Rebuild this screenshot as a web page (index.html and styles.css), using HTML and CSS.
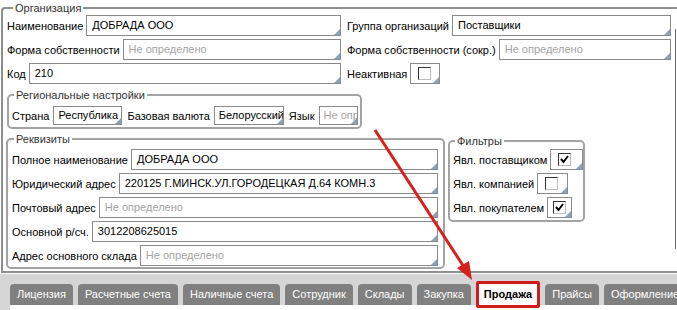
FILE: index.html
```html
<!DOCTYPE html>
<html>
<head>
<meta charset="utf-8">
<link rel="stylesheet" href="styles.css">
</head>
<body>
<div class="page">
  <fieldset class="org">
    <legend>Организация</legend>
    <div class="org-body">
      <div class="main">
        <div class="grid">
          <div class="cell"><span class="lbl">Наименование</span><div class="inp">ДОБРАДА ООО</div></div>
          <div class="cell"><span class="lbl">Группа организаций</span><div class="inp">Поставщики</div></div>
          <div class="cell"><span class="lbl">Форма собственности</span><div class="inp ph">Не определено</div></div>
          <div class="cell"><span class="lbl">Форма собственности (сокр.)</span><div class="inp ph">Не определено</div></div>
          <div class="cell"><span class="lbl">Код</span><div class="inp">210</div></div>
          <div class="cell"><span class="lbl">Неактивная</span><div class="inp chk w30"><span class="cb"></span></div></div>
        </div>
        <fieldset class="box region">
          <legend>Региональные настройки</legend>
          <div class="rrow">
            <span class="lbl">Страна</span><div class="inp small w69">Республика Беларусь</div>
            <span class="lbl">Базовая валюта</span><div class="inp small w70">Белорусский рубль</div>
            <span class="lbl">Язык</span><div class="inp small ph w39">Не определено</div>
          </div>
        </fieldset>
        <div class="lower">
          <fieldset class="box req">
            <legend>Реквизиты</legend>
            <div class="rows">
              <div class="cell"><span class="lbl">Полное наименование</span><div class="inp">ДОБРАДА ООО</div></div>
              <div class="cell"><span class="lbl">Юридический адрес</span><div class="inp">220125 Г.МИНСК.УЛ.ГОРОДЕЦКАЯ Д.64 КОМН.3</div></div>
              <div class="cell"><span class="lbl">Почтовый адрес</span><div class="inp ph">Не определено</div></div>
              <div class="cell"><span class="lbl">Основной р/сч.</span><div class="inp">3012208625015</div></div>
              <div class="cell"><span class="lbl">Адрес основного склада</span><div class="inp ph">Не определено</div></div>
            </div>
          </fieldset>
          <fieldset class="box filt">
            <legend>Фильтры</legend>
            <div class="rows">
              <div class="cell"><span class="lbl">Явл. поставщиком</span><div class="inp chk w33"><span class="cb on"><svg width="11" height="11" viewBox="0 0 11 11"><path d="M2 5 L4.5 8 L9 2" fill="none" stroke="#000" stroke-width="2"/></svg></span></div></div>
              <div class="cell"><span class="lbl">Явл. компанией</span><div class="inp chk w31"><span class="cb"></span></div></div>
              <div class="cell"><span class="lbl">Явл. покупателем</span><div class="inp chk w25"><span class="cb on"><svg width="11" height="11" viewBox="0 0 11 11"><path d="M2 5 L4.5 8 L9 2" fill="none" stroke="#000" stroke-width="2"/></svg></span></div></div>
            </div>
          </fieldset>
        </div>
      </div>
      <div class="side"></div>
    </div>
  </fieldset>
  <div class="tabbar">
    <div class="tabs">
      <span class="tab">Лицензия</span>
      <span class="tab">Расчетные счета</span>
      <span class="tab">Наличные счета</span>
      <span class="tab">Сотрудник</span>
      <span class="tab">Склады</span>
      <span class="tab">Закупка</span>
      <span class="tab active">Продажа</span>
      <span class="tab">Прайсы</span>
      <span class="tab">Оформление печати</span>
    </div>
    <div class="tabpanel"></div>
  </div>
  <svg class="arrow" width="677" height="310" viewBox="0 0 677 310">
    <line x1="375" y1="130" x2="464" y2="267" stroke="#d8201c" stroke-width="3"/>
    <polygon points="472,280 457,268 469,261" fill="#d8201c"/>
  </svg>
</div>
</body>
</html>
```

FILE: styles.css
```css
* { box-sizing: border-box; }
html, body { margin: 0; padding: 0; background: #fff; }
body {
  width: 677px;
  height: 310px;
  overflow: hidden;
  font-family: "Liberation Sans", Arial, sans-serif;
  font-size: 11px;
  color: #000;
}
.page { position: relative; width: 677px; height: 310px; overflow: hidden; }

fieldset { margin: 0; min-width: 0; }
legend {
  font-size: 11px;
  line-height: 12px;
  color: #333;
  padding: 0 2px;
}

.org {
  margin: 2px 0 0 1px;
  width: 700px;
  padding: 1px 4px 2px 4px;
  border: 2px solid #8e8e8e;
  border-right: none;
  border-radius: 4px 0 0 0;
}
.org > legend { margin-left: 6px; }

.org-body { display: flex; }
.main { width: 664px; flex: none; display: flex; flex-direction: column; }
.side {
  margin-left: 4px;
  margin-top: 14px;
  height: 220px;
  border-left: 1px solid #6a6a6a;
}

.grid {
  display: grid;
  grid-template-columns: 334px 324px;
  column-gap: 6px;
  row-gap: 3px;
}
.cell { display: flex; align-items: center; height: 21px; }
.lbl { white-space: nowrap; margin-right: 3px; flex: none; }

.inp {
  position: relative;
  flex: 1;
  height: 21px;
  line-height: 19px;
  border: 1px solid #8a8a8a;
  padding-left: 5px;
  white-space: nowrap;
  overflow: hidden;
  background: #fff;
}
.inp::after {
  content: "";
  position: absolute;
  right: 0;
  bottom: 0;
  width: 0;
  height: 0;
  border-left: 6px solid transparent;
  border-bottom: 6px solid #8fa2b4;
}
.inp.ph { color: #a3a3a3; }
.inp.small { flex: none; height: 19px; line-height: 17px; padding-left: 4px; margin-right: 5px; }
.inp.small:last-child { margin-right: 0; }
.w69 { width: 69px; }
.w70 { width: 70px; }
.w39 { width: 39px; }

.inp.chk { flex: none; padding-left: 7px; display: flex; align-items: center; }
.w30 { width: 30px; }
.w33 { width: 33px; }
.w31 { width: 31px; }
.w25 { width: 25px; padding-left: 5px !important; }
.cb {
  display: block;
  width: 13px;
  height: 13px;
  border: 1px solid;
  border-color: #333 #bdbdbd #bdbdbd #333;
  background: #fff;
}
.cb svg { display: block; }

.box {
  border: 2px solid #a3a3a3;
  border-radius: 5px;
}
.box > legend { margin-left: 2px; }

.region {
  margin-top: 5px;
  width: 355px;
  padding: 5px 3px 2px 3px;
}
.rrow { display: flex; align-items: center; height: 19px; }
.rrow .lbl { margin-right: 4px; }

.lower { display: flex; align-items: flex-start; margin-top: 4px; }
.req {
  margin-left: -1px;
  width: 439px;
  padding: 4px 5px 1px 4px;
}
.rows { display: flex; flex-direction: column; gap: 3px; }
.filt {
  margin-left: 3px;
  margin-top: 2px;
  width: 137px;
  padding: 2px 3px 2px 3px;
}
.filt .rows { align-items: flex-start; }

.tabbar {
  margin-top: 1px;
  height: 40px;
  background: #d5d5d5;
  padding-top: 10px;
}
.tabs { display: flex; gap: 5px; padding-left: 10px; height: 21px; }
.tab {
  flex: none;
  height: 21px;
  line-height: 21px;
  padding: 0 7px;
  background: #808080;
  color: #fff;
  border-radius: 4px 4px 0 0;
  white-space: nowrap;
}
.tab.active {
  margin-top: -3px;
  height: 27px;
  line-height: 21px;
  background: #fff;
  color: #000;
  font-weight: bold;
  border: 3px solid #d21c1c;
  border-radius: 2px;
  padding: 0 5px;
}
.tabpanel { margin-left: 10px; height: 10px; background: #fff; }

.arrow { position: absolute; left: 0; top: 0; pointer-events: none; }
```
